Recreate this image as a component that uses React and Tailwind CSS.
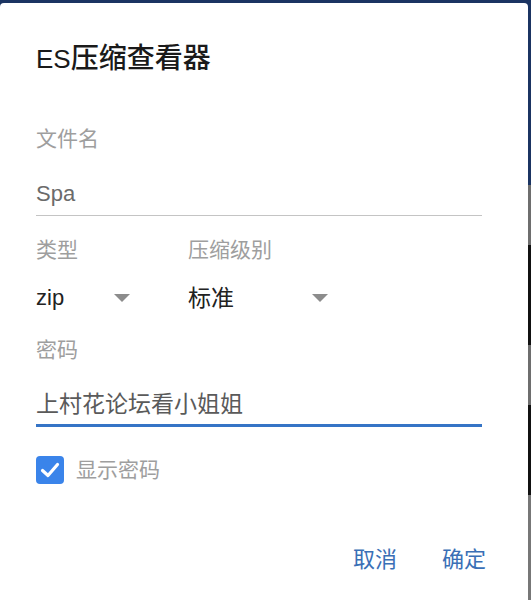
import React from 'react';

const font = { fontFamily: '"Liberation Sans", "Noto Sans CJK SC", sans-serif' };

function Arrow() {
  return (
    <svg width="16" height="8" viewBox="0 0 16 8" className="shrink-0">
      <polygon points="0,0 16,0 8,8" fill="#8c8c8c" />
    </svg>
  );
}

function Select({ value, width, cjk }) {
  return (
    <div className={`flex items-center justify-between ${width}`}>
      <span className={`${cjk ? 'text-[23px]' : 'text-[22px]'} leading-[32px] text-[#222]`}>{value}</span>
      <Arrow />
    </div>
  );
}

export default function App() {
  return (
    <div className="flex h-[600px] w-[531px] bg-[#1b3462]" style={font}>
      <div className="mt-[3px] flex flex-1 flex-col rounded-t-[4px] bg-white pl-[36px] pr-[46px] pt-[38px]">
        <h1 className="text-[28px] font-medium leading-[36px] text-[#1a1a1a]">
          <span className="text-[26px]">ES</span>压缩查看器
        </h1>

        <label className="mt-[48px] text-[21px] leading-[28px] text-[#9e9e9e]">文件名</label>
        <div className="mt-[26px] border-b border-[#c4c4c4] pb-[6px]">
          <span className="text-[22px] leading-[30px] text-[#6b6b6b]">Spa</span>
        </div>

        <div className="mt-[20px] flex">
          <div className="flex w-[152px] flex-col">
            <span className="text-[21px] leading-[28px] text-[#9e9e9e]">类型</span>
            <div className="mt-[18px]">
              <Select value="zip" width="w-[94px]" />
            </div>
          </div>
          <div className="flex flex-col">
            <span className="text-[21px] leading-[28px] text-[#9e9e9e]">压缩级别</span>
            <div className="mt-[18px]">
              <Select value="标准" width="w-[140px]" cjk />
            </div>
          </div>
        </div>

        <label className="mt-[22px] text-[21px] leading-[28px] text-[#9e9e9e]">密码</label>
        <div className="mt-[24px] border-b-[3px] border-[#3574c6] pb-[4px]">
          <span className="text-[23px] leading-[32px] text-[#5a5a5a]">上村花论坛看小姐姐</span>
        </div>

        <div className="mt-[29px] flex items-center gap-[12px]">
          <div className="flex h-[28px] w-[28px] items-center justify-center rounded-[4px] bg-[#3a84ea]">
            <svg width="22" height="22" viewBox="0 0 22 22">
              <path d="M3.5 11.5 L9 16.5 L18.5 5.5" fill="none" stroke="white" strokeWidth="3.2" strokeLinecap="round" strokeLinejoin="round" />
            </svg>
          </div>
          <span className="text-[21px] leading-[28px] text-[#9e9e9e]">显示密码</span>
        </div>

        <div className="-mr-[4px] mt-[61px] flex justify-end gap-[45px]">
          <button type="button" className="text-[22px] leading-[30px] text-[#3a6fb6]">取消</button>
          <button type="button" className="text-[22px] leading-[30px] text-[#3a6fb6]">确定</button>
        </div>
      </div>
      <div className="flex w-[3px] flex-col">
        <div className="h-[185px] bg-[#1b3462]" />
        <div className="h-[60px] bg-[#6e6e6e]" />
        <div className="h-[100px] bg-[#111]" />
        <div className="h-[60px] bg-[#6e6e6e]" />
        <div className="h-[90px] bg-[#111]" />
        <div className="flex-1 bg-[#777]" />
      </div>
    </div>
  );
}
